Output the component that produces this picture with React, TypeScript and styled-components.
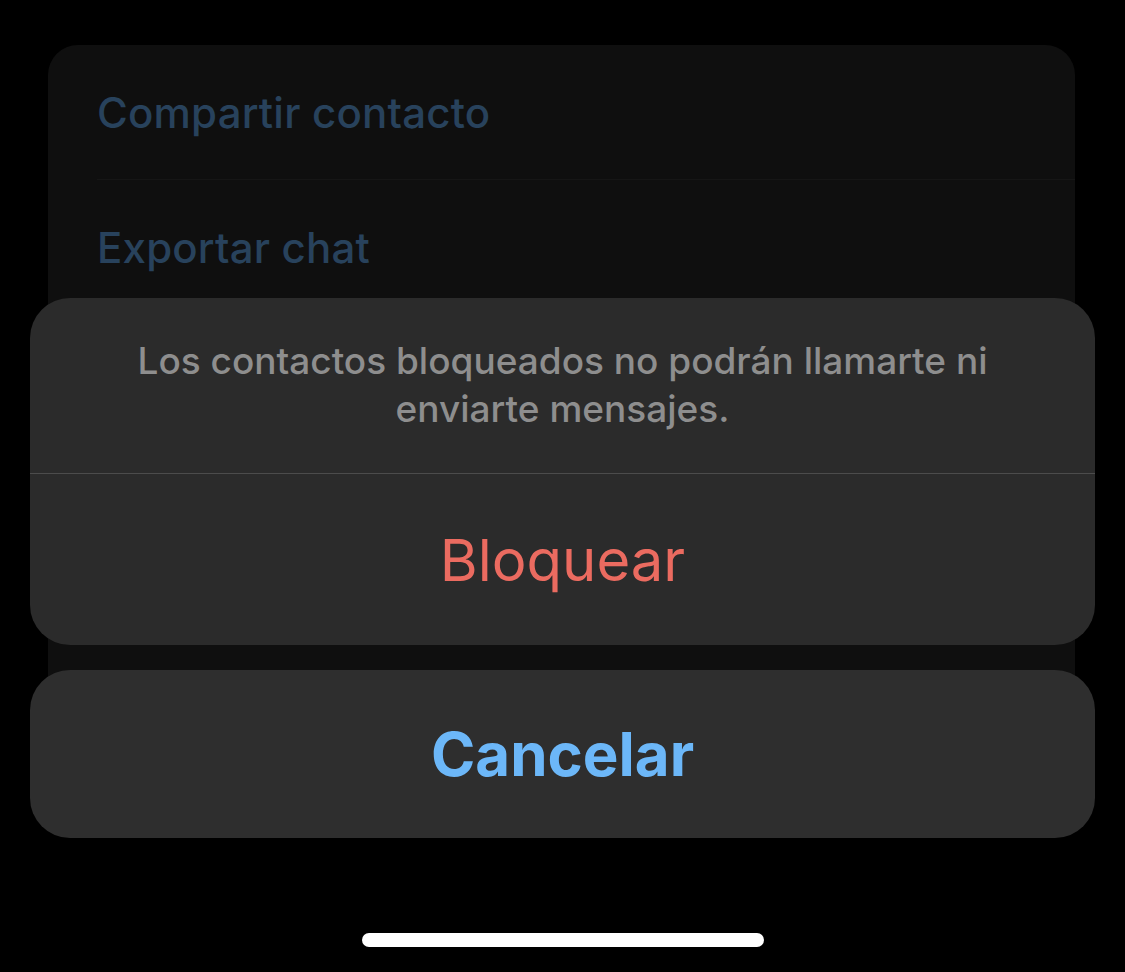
import React from "react";
import styled, {createGlobalStyle} from "styled-components";

const GlobalStyle = createGlobalStyle`
  html, body {
    margin: 0;
    padding: 0;
    background: #000;
  }

  body {
    font-family: Inter, "Noto Sans", "Liberation Sans", sans-serif;
    -webkit-font-smoothing: antialiased;
  }
`;

const Screen = styled.div`
  position: relative;
  width: 1125px;
  height: 972px;
  background: #000;
  overflow: hidden;
`;

const BackCard = styled.div`
  margin: 45px 50px 0 48px;
  height: 715px;
  background: #0f0f0f;
  border-radius: 30px;
  display: flex;
  flex-direction: column;
`;

const MenuRow = styled.div<{ $divider?: boolean }>`
  height: 134px;
  display: flex;
  align-items: center;
  margin-left: 49px;
  border-bottom: ${p => p.$divider ? "1px solid #161616" : "none"};
  font-size: 42px;
  font-weight: 500;
  color: #28425c;
  letter-spacing: 0.2px;
`;

// the action sheet sits over the dimmed chat info page
const SheetLayer = styled.div`
  position: absolute;
  top: 298px;
  left: 30px;
  right: 30px;
  display: flex;
  flex-direction: column;
  align-items: stretch;
`;

const ActionGroup = styled.div<{ $tone?: "main" | "cancel" }>`
  background: ${p => p.$tone === "cancel" ? "#2e2e2e" : "#2b2b2b"};
  border-radius: 40px;
  overflow: hidden;
  display: flex;
  flex-direction: column;
  & + & {
    margin-top: 25px;
  }
`;

const Message = styled.div`
  padding: 39px 40px 40px;
  text-align: center;
  font-size: 37px;
  line-height: 48px;
  font-weight: 500;
  color: #8e8e8e;
  border-bottom: 1px solid #4c4c4c;
`;

const ActionButton = styled.button<{ $kind: "destructive" | "cancel" }>`
  height: ${p => p.$kind === "cancel" ? "168px" : "171px"};
  border: none;
  background: transparent;
  padding: 0;
  display: flex;
  align-items: center;
  justify-content: center;
  font-family: inherit;
  font-size: ${p => p.$kind === "cancel" ? "60px" : "58px"};
  font-weight: ${p => p.$kind === "cancel" ? 700 : 400};
  color: ${p => p.$kind === "cancel" ? "#6cb7f8" : "#eb6b60"};
  cursor: pointer;
`;

const HomeIndicator = styled.div`
  align-self: center;
  width: 402px;
  height: 14px;
  margin-top: 95px;
  border-radius: 7px;
  background: #fff;
`;

export default function App() {
  return (
    <Screen>
      <GlobalStyle/>
      <BackCard>
        <MenuRow $divider>Compartir contacto</MenuRow>
        <MenuRow>Exportar chat</MenuRow>
      </BackCard>
      <SheetLayer>
        <ActionGroup>
          <Message>
            Los contactos bloqueados no podrán llamarte ni<br/>
            enviarte mensajes.
          </Message>
          <ActionButton $kind="destructive">Bloquear</ActionButton>
        </ActionGroup>
        <ActionGroup $tone="cancel">
          <ActionButton $kind="cancel">Cancelar</ActionButton>
        </ActionGroup>
        <HomeIndicator/>
      </SheetLayer>
    </Screen>
  );
}
